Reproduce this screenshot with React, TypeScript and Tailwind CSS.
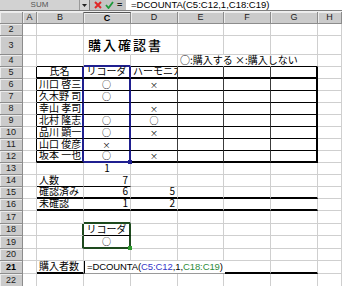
import React from 'react';

const GRID = 'grid grid-cols-[23px_14px_47px_47px_47px_46px_47px_47px_1fr]';
const JP = { fontFamily: '"Noto Sans CJK JP", "Liberation Sans", sans-serif' };
const LAT = { fontFamily: '"Liberation Sans", Arial, sans-serif' };

// cell edges
const R = 'border-r border-r-[#cfcfcf]';
const B = 'border-b border-b-[#cfcfcf]';
const R_NONE = 'border-r border-r-transparent';
const R_BLK = 'border-r border-r-black';
const R_BLK2 = 'border-r-2 border-r-black';
const R_DK = 'border-r border-r-[#3c3c3c]';
const R_BLUE = 'border-r-2 border-r-[#1f1f8f]';
const R_GRN = 'border-r-2 border-r-[#1e4a1e]';
const B_BLK = 'border-b border-b-black';
const B_BLK2 = 'border-b-2 border-b-black';
const B_BLUE = 'border-b-2 border-b-[#1f1f8f]';
const B_GRN = 'border-b-2 border-b-[#1e4a1e]';

type Cell = {
  t?: React.ReactNode;
  r?: string;
  b?: string;
  a?: 'l' | 'c' | 'r';
  x?: string;
};

type Row = { n: number; h: string; cells: Record<string, Cell>; bold?: boolean };

const COLS = ['A', 'B', 'C', 'D', 'E', 'F', 'G', 'H'];

const Maru = () => <span className="text-[9px]">○</span>;
const Batsu = () => <span className="text-[8px]">×</span>;

const members: [string, boolean | null, boolean | null][] = [
  ['川口 啓三', true, false],
  ['久木野 司', true, null],
  ['幸山 孝司', null, false],
  ['北村 隆志', true, true],
  ['品川 顕一', true, false],
  ['山口 俊彦', false, null],
  ['坂本 一也', true, false]
];

const mark = (v: boolean | null) => (v === null ? undefined : v ? <Maru /> : <Batsu />);

const tableRows: Row[] = members.map(([name, c, d], i) => {
  const last = i === members.length - 1;
  const bb = last ? B_BLK2 : B_BLK;
  return {
    n: 6 + i,
    h: 'h-[12px]',
    cells: {
      A: { r: R_BLK },
      B: { t: name, r: R_BLUE, b: bb },
      C: {
        t: mark(c),
        a: 'c',
        r: R_BLUE,
        b: last ? B_BLUE : B_BLK,
        x: last ? 'handle-blue' : undefined
      },
      D: { t: mark(d), a: 'c', r: R_DK, b: bb },
      E: { r: R_DK, b: bb },
      F: { r: R_DK, b: bb },
      G: { r: R_BLK2, b: bb }
    }
  };
});

const rows: Row[] = [
  { n: 2, h: 'h-[12px]', cells: {} },
  {
    n: 3,
    h: 'h-[19px]',
    cells: {
      C: {
        t: <span className="text-[13px] tracking-[2px] font-medium pl-[2px]">購入確認書</span>,
        r: R_NONE
      }
    }
  },
  {
    n: 4,
    h: 'h-[12px]',
    cells: {
      B: { b: B_BLK },
      C: { b: B_BLUE },
      D: { b: B_BLK },
      E: { t: '○:購入する  ×:購入しない', r: R_NONE, b: B_BLK },
      F: { r: R_NONE, b: B_BLK },
      G: { b: B_BLK }
    }
  },
  {
    n: 5,
    h: 'h-[12px]',
    cells: {
      A: { r: R_BLK },
      B: { t: '氏名', a: 'c', r: R_BLUE, b: B_BLK2 },
      C: { t: 'リコーダ', a: 'c', r: R_BLUE, b: B_BLK2 },
      D: { t: 'ハーモニカ', r: R_DK, b: B_BLK2, x: 'overflow-hidden' },
      E: { r: R_DK, b: B_BLK2 },
      F: { r: R_DK, b: B_BLK2 },
      G: { r: R_BLK2, b: B_BLK2 }
    }
  },
  ...tableRows,
  { n: 13, h: 'h-[12px]', cells: { C: { t: '1', a: 'c' } } },
  {
    n: 14,
    h: 'h-[12px]',
    cells: { B: { t: '人数', b: B_BLK }, C: { t: '7', a: 'r', b: B_BLK } }
  },
  {
    n: 15,
    h: 'h-[12px]',
    cells: {
      B: { t: '確認済み', b: B_BLK2 },
      C: { t: '6', a: 'r', b: B_BLK2 },
      D: { t: '5', a: 'r', b: B_BLK2 },
      E: { b: B_BLK2 },
      F: { b: B_BLK2 },
      G: { b: B_BLK2 }
    }
  },
  {
    n: 16,
    h: 'h-[12px]',
    cells: {
      B: { t: '未確認', b: B_BLK2 },
      C: { t: '1', a: 'r', b: B_BLK2 },
      D: { t: '2', a: 'r', b: B_BLK2 },
      E: { b: B_BLK2 },
      F: { b: B_BLK2 },
      G: { b: B_BLK2 }
    }
  },
  { n: 17, h: 'h-[13px]', cells: { C: { b: B_GRN } } },
  {
    n: 18,
    h: 'h-[12px]',
    cells: { B: { r: R_GRN }, C: { t: 'リコーダ', a: 'c', r: R_GRN, b: B_BLK } }
  },
  {
    n: 19,
    h: 'h-[13px]',
    cells: { B: { r: R_GRN }, C: { t: <Maru />, a: 'c', r: R_GRN, b: B_GRN, x: 'handle-green' } }
  },
  { n: 20, h: 'h-[12px]', cells: {} },
  {
    n: 21,
    h: 'h-[13px]',
    bold: true,
    cells: {
      B: { t: '購入者数', b: B_BLK2 },
      C: { x: 'edit' },
      D: { b: B_BLK2 },
      E: { b: B_BLK2 },
      F: { b: B_BLK2 },
      G: { b: B_BLK2 }
    }
  },
  { n: 22, h: 'h-[13px]', cells: {} }
];

function Formula({ cell }: { cell?: boolean }) {
  return (
    <span style={LAT} className={cell ? 'text-[9.5px] tracking-[-0.1px]' : 'text-[9.5px]'}>
      =DCOUNTA(
      <span className={cell ? 'text-[#3535c8]' : ''}>C5:C12</span>,1,
      <span className={cell ? 'text-[#2e8b3a]' : ''}>C18:C19</span>)
    </span>
  );
}

function SheetCell({ c }: { c: Cell }) {
  const align = c.a === 'c' ? 'justify-center' : c.a === 'r' ? 'justify-end pr-[2px]' : 'justify-start pl-[2px]';
  const extra = c.x === 'overflow-hidden' ? 'overflow-hidden' : '';
  return (
    <div
      className={`relative flex items-center whitespace-nowrap text-[10px] leading-none text-black ${align} ${extra} ${c.r ?? R} ${c.b ?? B}`}
    >
      {c.t !== undefined && <span className="inline-block -translate-y-[1px]">{c.t}</span>}
      {c.x === 'handle-blue' && (
        <span className="absolute -right-[3px] -bottom-[3px] w-[4px] h-[4px] bg-[#1f1f8f] z-10" />
      )}
      {c.x === 'handle-green' && (
        <span className="absolute -right-[3px] -bottom-[3px] w-[4px] h-[4px] bg-[#2e9b2e] z-10" />
      )}
      {c.x === 'edit' && (
        <div className="absolute left-0 top-0 h-[13px] w-[141px] z-10 bg-white border-l border-l-black border-b border-b-[#9a9a9a] flex items-center pl-[2px] pb-[1px]">
          <Formula cell />
        </div>
      )}
    </div>
  );
}

export default function App() {
  return (
    <div className="w-[342px] h-[286px] overflow-hidden bg-white select-none" style={JP}>
      {/* formula bar */}
      <div className="h-[11px] flex bg-[#c4c4c4] border-b border-[#808080]">
        <div
          style={LAT}
          className="w-[80px] flex items-center justify-center text-[8px] text-[#555] bg-[#d2d2d2] border-r border-[#9a9a9a]"
        >
          SUM
        </div>
        <div className="w-[10px] flex items-center justify-center bg-[#d6d6d6] border-r border-[#7a7a7a]">
          <svg width="5" height="3" viewBox="0 0 5 3">
            <path d="M0 0h5L2.5 3z" fill="#222" />
          </svg>
        </div>
        <div className="w-[36px] flex items-center justify-around px-[2px]">
          <svg width="8" height="8" viewBox="0 0 8 8">
            <path d="M1 1l6 6M7 1L1 7" stroke="#e02828" strokeWidth="2" />
          </svg>
          <svg width="9" height="8" viewBox="0 0 9 8">
            <path d="M1 4l2.5 3L8 1" stroke="#1c9a3a" strokeWidth="1.8" fill="none" />
          </svg>
          <span style={LAT} className="text-[9px] font-bold leading-none text-[#222]">
            =
          </span>
        </div>
        <div className="flex-1 bg-white flex items-center pl-[5px] leading-none">
          <Formula />
        </div>
      </div>

      {/* column headers */}
      <div className={`${GRID} h-[13px] border-t border-[#efefef]`} style={LAT}>
        <div className="bg-[#cbcbcb] border-r border-b border-[#8c8c8c] shadow-[inset_1px_1px_0_#ececec]" />
        {COLS.map((col) => (
          <div
            key={col}
            className={`flex items-center justify-center text-[9px] leading-none bg-[#cbcbcb] border-r border-b border-[#8c8c8c] shadow-[inset_1px_1px_0_#ececec] ${col === 'C' ? 'font-bold text-black border-t border-t-[#555]' : 'text-[#222]'}`}
          >
            {col}
          </div>
        ))}
      </div>

      {rows.map((row) => (
        <div key={row.n} className={`${GRID} ${row.h}`}>
          <div
            style={LAT}
            className={`flex items-center justify-center text-[9px] leading-none bg-[#cbcbcb] border-r border-b border-[#8c8c8c] shadow-[inset_1px_1px_0_#ececec] ${row.bold ? 'font-bold text-black' : 'text-[#222]'}`}
          >
            {row.n}
          </div>
          {COLS.map((col) => (
            <SheetCell key={col} c={row.cells[col] ?? {}} />
          ))}
        </div>
      ))}
    </div>
  );
}
